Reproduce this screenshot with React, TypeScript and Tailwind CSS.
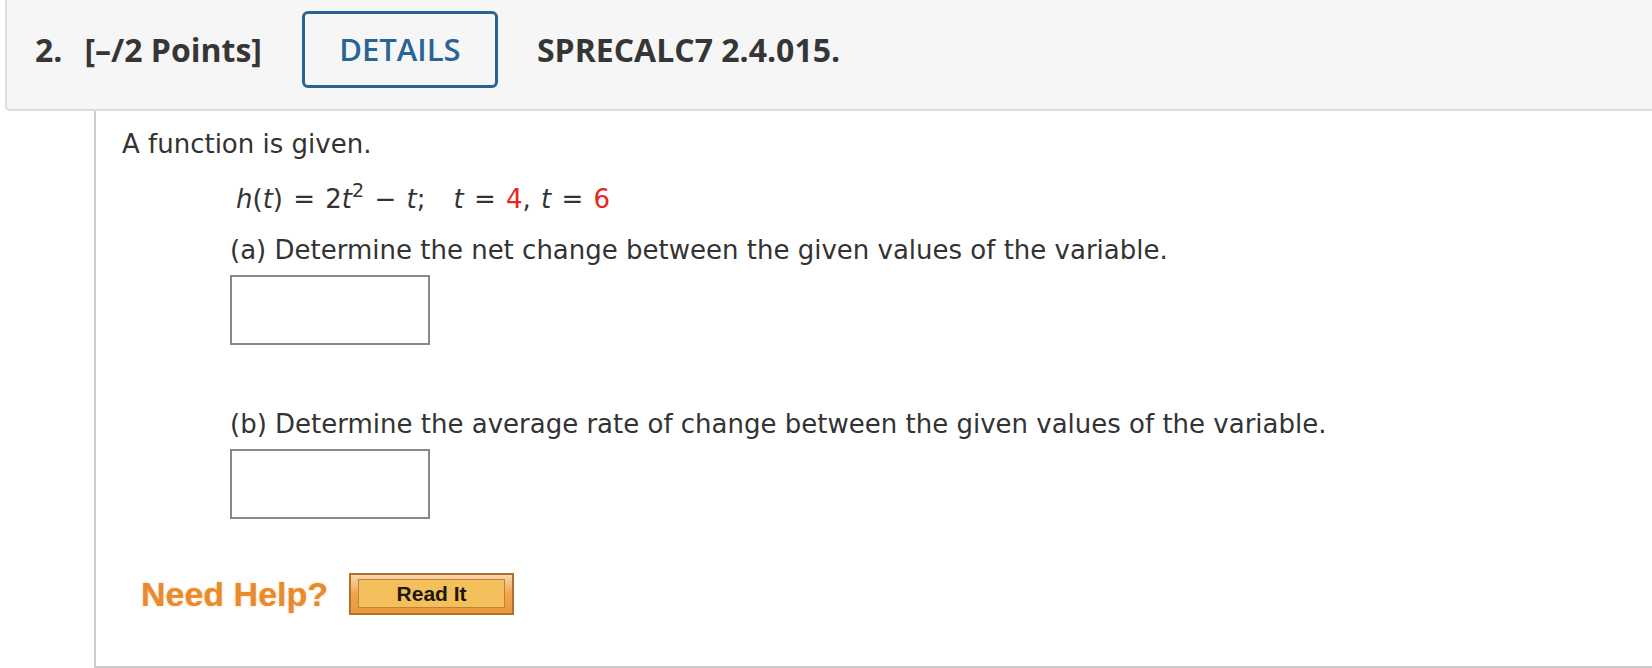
import React from "react";

export default function App() {
  return (
    <div className="w-[1652px] h-[668px] bg-white overflow-hidden">
      {/* Header */}
      <div className="ml-[5px] h-[111px] bg-[#f6f6f6] border-l-2 border-b-2 border-[#dddddd] rounded-bl-[5px] flex items-center pb-[10px] pl-[28px] font-['Open_Sans',sans-serif] text-[#363636]">
        <span className="text-[32px] font-bold leading-none whitespace-pre">
          2.<span className="ml-[22px]">[–/2 Points]</span>
        </span>
        <div className="ml-[40px] w-[196px] h-[77px] border-[3px] border-[#2a6496] rounded-[6px] flex items-center justify-center text-[#2a6496] text-[31px] font-semibold leading-none">
          DETAILS
        </div>
        <span className="ml-[39px] text-[32px] font-bold leading-none">SPRECALC7 2.4.015.</span>
      </div>

      {/* Content */}
      <div className="ml-[94px] h-[557px] border-l-2 border-b-2 border-[#cccccc] pl-[26px] pt-[18px] font-['DejaVu_Sans',Verdana,sans-serif] text-[26px] leading-[30px] text-[#333333]">
        <p>A function is given.</p>
        <div className="ml-[108px]">
          <p className="mt-[25px] ml-[6px] whitespace-pre [word-spacing:2px]">
            <i>h</i>(<i>t</i>) = 2<i>t</i>
            <span className="relative top-[-11px] text-[19px]">2</span> − <i>t</i>;
            <span className="inline-block w-[28px]"></span>
            <i>t</i> = <span className="text-[#e5261d]">4</span>, <i>t</i> ={" "}
            <span className="text-[#e5261d]">6</span>
          </p>
          <p className="mt-[19px]">(a) Determine the net change between the given values of the variable.</p>
          <div className="mt-[10px] w-[200px] h-[70px] border-2 border-[#888888] bg-white"></div>
          <p className="mt-[64px]">(b) Determine the average rate of change between the given values of the variable.</p>
          <div className="mt-[10px] w-[200px] h-[70px] border-2 border-[#888888] bg-white"></div>
        </div>
        <div className="mt-[54px] ml-[19px] flex items-center">
          <span className="font-['Liberation_Sans',Arial,sans-serif] font-bold text-[34px] leading-none text-[#e98b2c] [text-shadow:0_0_2px_rgba(233,139,44,0.55)]">
            Need Help?
          </span>
          <div className="ml-[21px] w-[165px] h-[42px] border-2 border-[#b0712c] bg-gradient-to-b from-[#f8d7ad] via-[#f0a548] to-[#eb9a3c] px-[7px] pt-[4px] pb-[5px]">
            <div className="h-full border border-[#c08236] bg-[#f4c05b] flex items-center justify-center">
              <span className="font-['Liberation_Sans',Arial,sans-serif] font-bold text-[21px] leading-none text-[#1c1a10]">
                Read It
              </span>
            </div>
          </div>
        </div>
      </div>
    </div>
  );
}
